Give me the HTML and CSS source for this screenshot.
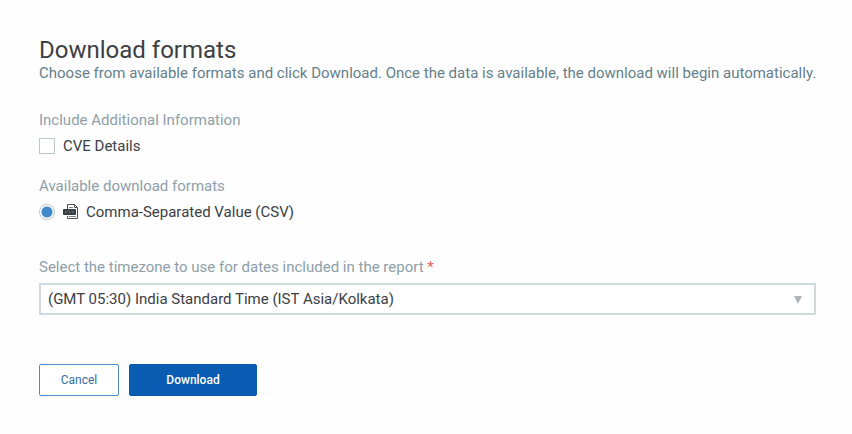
FILE: index.html
```html
<!DOCTYPE html>
<html lang="en">
<head>
    <meta charset="UTF-8">
    <meta name="viewport" content="width=device-width, initial-scale=1.0">
    <title>Download formats</title>
    <link rel="stylesheet" href="styles.css">
</head>
<body>
    <form class="download-form">
        <h2>Download formats</h2>
        <p class="intro">Choose from available formats and click Download. Once the data is available, the download will begin automatically.</p>

        <fieldset>
            <legend>Include Additional Information</legend>
            <div class="option">
                <input type="checkbox" id="cveDetails" name="cveDetails">
                <label for="cveDetails">CVE Details</label>
            </div>
        </fieldset>

        <fieldset>
            <legend>Available download formats</legend>
            <div class="option format">
                <input type="radio" id="formatCsv" name="format" value="csv" checked>
                <svg class="csv-icon" width="15" height="16" viewBox="0 0 15 16" aria-hidden="true">
                    <path d="M4.5 5V.5h7l3 3v11h-10V12" fill="#fff" stroke="#4a5257"/>
                    <path d="M11.5.5v3h3" fill="none" stroke="#4a5257"/>
                    <path d="M6 3.5h4M6 12.500h7" fill="none" stroke="#7d8589"/>
                    <rect y="5" width="13" height="6" rx="1" fill="#343c41"/>
                    <path d="M4.500 7H2.500v2h2M7.500 7H6v1h1.500v1H6M9 6.500l1 3 1-3" fill="none" stroke="#747b80" stroke-width=".6"/>
                </svg>
                <label for="formatCsv">Comma-Separated Value (CSV)</label>
            </div>
        </fieldset>

        <div class="timezone">
            <label for="timezone">Select the timezone to use for dates included in the report <span class="required">*</span></label>
            <div class="select-box">
                <select id="timezone" name="timezone" required>
                    <option>(GMT 05:30) India Standard Time (IST Asia/Kolkata)</option>
                </select>
                <svg class="arrow" width="8" height="8" viewBox="0 0 8 8" aria-hidden="true">
                    <path d="M0 0h8L4 8z" fill="#b1b5b8"/>
                </svg>
            </div>
        </div>

        <div class="buttons">
            <button type="button" class="cancel">Cancel</button>
            <button type="submit" class="download">Download</button>
        </div>
    </form>
</body>
</html>
```
FILE: styles.css
```css
* {
    box-sizing: border-box;
}

body {
    margin: 0;
    background-color: #fefefe;
    color: #3b4045;
    font-family: Roboto, Arial, sans-serif;
    font-size: 15px;
    line-height: 20px;
}

.download-form {
    padding: 37px 36px 36px 39px;
}

h2 {
    margin: 0;
    color: #3d4043;
    font-size: 24px;
    font-weight: 400;
    line-height: 26px;
}

.intro {
    margin: 0 -16px 27px 0;
    color: #64808a;
}

fieldset {
    margin: 0 0 20px;
    padding: 0;
    border: 0;
    min-width: 0;
}

legend {
    padding: 0;
    color: #8e9fa9;
}

.option {
    display: flex;
    align-items: center;
    gap: 8px;
    padding-top: 6px;
}

.format {
    padding-bottom: 15px;
}

input[type="checkbox"],
input[type="radio"] {
    appearance: none;
    width: 16px;
    height: 16px;
    margin: 0;
    border: 1px solid #bcc7cd;
    background-color: #fff;
}

input[type="radio"] {
    border-radius: 50%;
}

input[type="radio"]:checked {
    background-image: radial-gradient(circle, #4289c9 5px, #fff 6px);
}

input[type="checkbox"]:checked {
    background-color: #4289c9;
}

.timezone label {
    display: block;
    margin-bottom: 6px;
    color: #8e9fa9;
}

.required {
    color: #e8625f;
}

.select-box {
    position: relative;
}

select {
    appearance: none;
    display: block;
    width: 100%;
    height: 32px;
    padding: 0 32px 0 7px;
    border: 2px solid #d0d9de;
    border-radius: 0;
    background-color: #fff;
    color: #3b4045;
    font: inherit;
}

.arrow {
    position: absolute;
    top: 13px;
    right: 14px;
    pointer-events: none;
}

.buttons {
    display: flex;
    gap: 10px;
    margin-top: 49px;
}

button {
    height: 32px;
    padding: 0;
    border: 1px solid #0a5cb2;
    border-radius: 2px;
    font-family: inherit;
    font-size: 12px;
    cursor: pointer;
}

.cancel {
    width: 80px;
    background-color: #fff;
    border-color: #4d8acb;
    color: #3a6da5;
}

.download {
    width: 128px;
    background-color: #0a5cb2;
    color: #fff;
    font-weight: 500;
}
```
